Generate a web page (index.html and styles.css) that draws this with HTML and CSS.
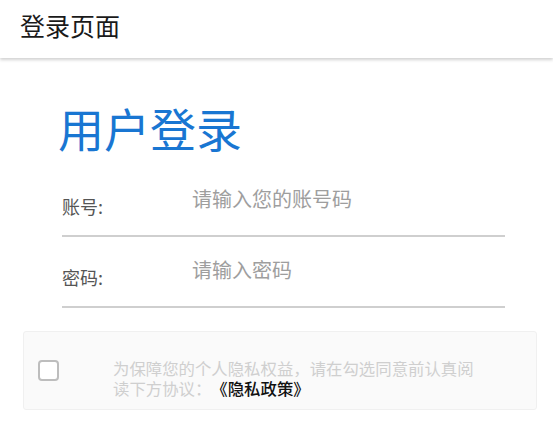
FILE: index.html
```html
<!DOCTYPE html>
<html lang="zh-CN">
<head>
    <meta charset="UTF-8">
    <meta name="viewport" content="width=device-width, initial-scale=1.0">
    <title>登录页面</title>
    <link rel="stylesheet" href="styles.css">
</head>
<body>
    <header class="app-bar">
        <h1>登录页面</h1>
    </header>
    <main class="login">
        <h2 class="login-title">用户登录</h2>
        <div class="field">
            <label for="account">账号:</label>
            <input type="text" id="account" placeholder="请输入您的账号码">
        </div>
        <div class="field">
            <label for="password">密码:</label>
            <input type="password" id="password" placeholder="请输入密码">
        </div>
    </main>
    <div class="privacy">
        <input type="checkbox" id="agree" class="privacy-check">
        <p class="privacy-text">为保障您的个人隐私权益，请在勾选同意前认真阅读下方协议：<a href="#" class="policy">《隐私政策》</a></p>
    </div>
</body>
</html>
```

FILE: styles.css
```css
body {
    margin: 0;
    font-family: "Noto Sans CJK SC", "Noto Sans", sans-serif;
    background: #fff;
    color: #333;
    text-spacing-trim: space-all;
}
.app-bar {
    height: 58px;
    padding: 0 20px;
    display: flex;
    align-items: center;
    background: #fff;
    box-shadow: 0 2px 3px rgba(0, 0, 0, 0.18);
}
.app-bar h1 {
    margin: 0 0 8px;
    font-size: 25px;
    font-weight: 400;
    color: #1a1a1a;
}
.login {
    padding: 0 48px 0 62px;
}
.login-title {
    margin: 36px 0 6px -4px;
    font-size: 46px;
    line-height: 66px;
    font-weight: 400;
    color: #1976d2;
}
.field {
    display: flex;
    align-items: center;
    height: 69px;
    border-bottom: 2px solid #cfcfcf;
}
.field label {
    width: 130px;
    font-size: 18px;
    color: #555;
    padding-top: 10px;
}
.field input {
    flex: 1;
    border: none;
    outline: none;
    padding: 0;
    margin-top: -4px;
    font-family: inherit;
    font-size: 20px;
    color: #333;
    background: transparent;
}
.field input::placeholder {
    color: #9e9e9e;
}
.privacy {
    display: flex;
    align-items: center;
    margin: 23px 16px 0 23px;
    height: 77px;
    background: #fafafa;
    border: 1px solid #f0f0f0;
    border-radius: 3px;
}
.privacy-check {
    appearance: none;
    width: 21px;
    height: 21px;
    margin: 0 0 0 14px;
    border: 2px solid #bdbdbd;
    border-radius: 4px;
    background: #fff;
    flex-shrink: 0;
    box-sizing: border-box;
}
.privacy-text {
    margin: 14px 0 0 54px;
    width: 364px;
    font-size: 16.4px;
    line-height: 20px;
    color: #cfcfcf;
}
.policy {
    color: #111;
    font-weight: 500;
    text-decoration: none;
}
```
